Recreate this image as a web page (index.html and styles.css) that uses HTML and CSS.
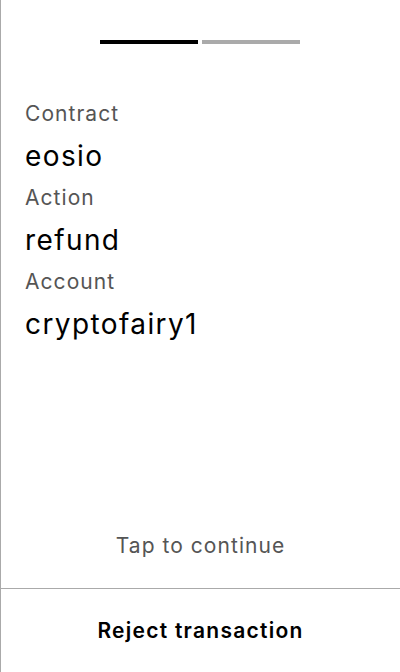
FILE: index.html
```html
<!DOCTYPE html>
<html>
<head>
<meta charset="utf-8">
<link rel="stylesheet" href="styles.css">
</head>
<body>
<div class="screen">
  <div class="progress">
    <div class="bar active"></div>
    <div class="bar"></div>
  </div>
  <div class="fields">
    <div class="label">Contract</div>
    <div class="value">eosio</div>
    <div class="label">Action</div>
    <div class="value">refund</div>
    <div class="label">Account</div>
    <div class="value">cryptofairy1</div>
  </div>
  <div class="tap">Tap to continue</div>
  <div class="reject">Reject transaction</div>
</div>
</body>
</html>
```

FILE: styles.css
```css
html, body {
  margin: 0;
  padding: 0;
  background: #fff;
}
body {
  font-family: Inter, "Noto Sans", sans-serif;
}
.screen {
  width: 399px;
  height: 672px;
  border-left: 1px solid #aaaaaa;
  display: flex;
  flex-direction: column;
}
.progress {
  display: flex;
  justify-content: center;
  gap: 4px;
  padding-top: 40px;
  padding-right: 1px;
}
.bar {
  width: 98px;
  height: 4px;
  background: #aaaaaa;
}
.bar.active {
  background: #000;
}
.fields {
  padding: 56px 24px 0 24px;
  flex: 1;
}
.label {
  font-size: 21px;
  line-height: 28px;
  letter-spacing: 0.05em;
  color: #555555;
}
.value {
  font-size: 28px;
  line-height: 56px;
  letter-spacing: 0.05em;
  color: #000;
}
.tap {
  text-align: center;
  font-size: 21px;
  letter-spacing: 0.05em;
  color: #555555;
  line-height: 28px;
  padding-bottom: 28px;
}
.reject {
  border-top: 1px solid #aaaaaa;
  text-align: center;
  font-size: 21px;
  font-weight: 600;
  letter-spacing: 0.06em;
  color: #000;
  height: 83px;
  line-height: 83px;
}
```
